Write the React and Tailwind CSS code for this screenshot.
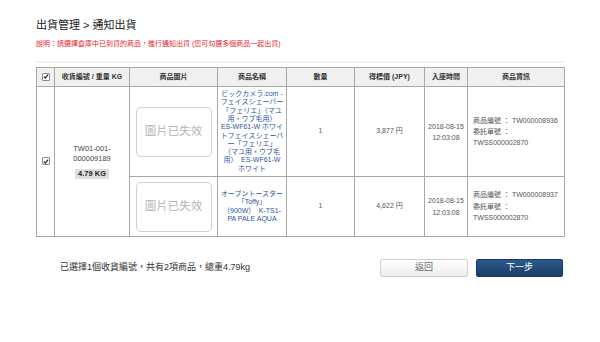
import React from 'react';

function Check() {
  return (
    <span className="inline-flex items-center justify-center w-[8px] h-[8px] border border-[#8a8a8a] bg-white rounded-[1px] align-middle">
      <svg viewBox="0 0 8 8" className="w-[7px] h-[7px]">
        <path d="M1.2 4.2 L3 6 L6.8 1.6" fill="none" stroke="#222" strokeWidth="1.6" />
      </svg>
    </span>
  );
}

function NoImage() {
  return (
    <div className="mx-auto w-[76px] h-[50px] rounded-[5px] border-[1.5px] border-[#d0d0d0] flex items-center justify-center text-[11.5px] text-[#b5b5b5]">
      圖片已失效
    </div>
  );
}

const td = 'border border-[#a8a8a8] text-center align-middle';

export default function App() {
  return (
    <div className="w-[600px] h-[342px] bg-white font-[Liberation_Sans,Noto_Sans_CJK_TC,sans-serif] text-[#333]">
      <div className="pl-[36px] pt-[17px]">
        <h1 className="text-[11px] leading-[16px] text-[#222]">出貨管理 &gt; 通知出貨</h1>
        <p className="mt-[6px] text-[7px] leading-[10px] text-[#e8262b]">
          說明：請選擇倉庫中已到貨的商品，進行通知出貨 (您可勾選多個商品一起出貨)
        </p>
        <div className="mt-[12px] w-[528px] h-[2px] bg-[#f1f1f1]" />

        <table className="mt-[4px] w-[528px] table-fixed border-collapse text-[7px]">
          <colgroup>
            <col className="w-[18px]" />
            <col className="w-[75px]" />
            <col className="w-[88px]" />
            <col className="w-[69px]" />
            <col className="w-[68px]" />
            <col className="w-[70px]" />
            <col className="w-[43px]" />
            <col className="w-[97px]" />
          </colgroup>
          <thead>
            <tr className="h-[19px] bg-[#f0f0f0] text-[#333] font-medium">
              <th className={td}><Check /></th>
              <th className={td}>收貨編號 / 重量 KG</th>
              <th className={td}>商品圖片</th>
              <th className={td}>商品名稱</th>
              <th className={td}>數量</th>
              <th className={td}>得標價 (JPY)</th>
              <th className={td}>入庫時間</th>
              <th className={td}>商品資訊</th>
            </tr>
          </thead>
          <tbody>
            <tr className="h-[90px]">
              <td rowSpan={2} className={td}><Check /></td>
              <td rowSpan={2} className={td}>
                <div className="text-[7.5px] leading-[10px] text-[#444]">TW01-001-<br />000009189</div>
                <span className="inline-block mt-[5px] px-[3px] h-[10px] leading-[10px] bg-[#dedede] text-[7.5px] font-bold text-[#222]">4.79 KG</span>
              </td>
              <td className={td}><NoImage /></td>
              <td className={`${td} px-[2px] text-[7px] leading-[8.3px] text-[#2a57a0]`}>
                ビックカメラ.com -<br />
                フェイスシェーバー<br />
                「フェリエ」（マユ<br />
                用・ウブ毛用）<br />
                ES-WF61-W ホワイ<br />
                トフェイスシェーバ<br />
                ー「フェリエ」<br />
                （マユ用・ウブ毛<br />
                用）　ES-WF61-W<br />
                ホワイト
              </td>
              <td className={`${td} text-[#8a5a2b]`}>1</td>
              <td className={`${td} text-[#555]`}>3,877 円</td>
              <td className={`${td} leading-[11px] text-[#555]`}>2018-08-15<br />12:03:08</td>
              <td className={`${td} text-left pl-[5px] leading-[11px] text-[#555]`}>
                商品編號 ： TW000008936<br />
                委託單號 ：<br />
                TWSS000002870
              </td>
            </tr>
            <tr className="h-[60px]">
              <td className={td}><NoImage /></td>
              <td className={`${td} px-[2px] text-[7px] leading-[8.3px] text-[#2a57a0]`}>
                オーブントースター<br />
                「Toffy」<br />
                （900W）　K-TS1-<br />
                PA PALE AQUA
              </td>
              <td className={`${td} text-[#8a5a2b]`}>1</td>
              <td className={`${td} text-[#555]`}>4,622 円</td>
              <td className={`${td} leading-[12px] text-[#555]`}>2018-08-15<br />12:03:08</td>
              <td className={`${td} text-left pl-[5px] leading-[11.5px] text-[#555]`}>
                商品編號 ： TW000008937<br />
                委託單號 ：<br />
                TWSS000002870
              </td>
            </tr>
          </tbody>
        </table>

        <div className="mt-[22px] w-[528px] h-[18px] flex items-center">
          <span className="pl-[24px] text-[9px] text-[#333]">已選擇1個收貨編號，共有2項商品，總重4.79kg</span>
          <div className="ml-auto flex gap-[8px] mr-[1px]">
            <button className="w-[88px] h-[18px] rounded-[2px] border border-[#cfcfcf] bg-gradient-to-b from-white to-[#ececec] text-[9px] text-[#666]">
              返回
            </button>
            <button className="w-[87px] h-[18px] rounded-[2px] border border-[#163760] bg-gradient-to-b from-[#2d5a8c] to-[#1a3e69] text-[9px] text-white">
              下一步
            </button>
          </div>
        </div>
      </div>
    </div>
  );
}
